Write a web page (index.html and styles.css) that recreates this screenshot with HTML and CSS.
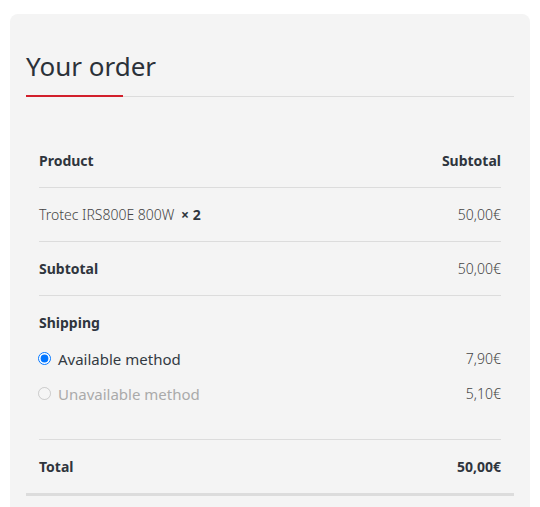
FILE: index.html
```
<!DOCTYPE html>
<html lang="en">
<head>
    <meta charset="UTF-8">
    <meta name="viewport" content="width=device-width, initial-scale=1.0">
    <title>Your order</title>
    <link rel="stylesheet" href="styles.css">
</head>
<body>
    <div class="order-card">
        <h2 class="order-title">Your order</h2>
        <div class="title-rule">
            <span class="rule-accent"></span>
            <span class="rule-line"></span>
        </div>

        <div class="order-table">
            <div class="row row-head">
                <span>Product</span>
                <span>Subtotal</span>
            </div>
            <div class="row">
                <span class="product-name">Trotec IRS800E 800W <span class="qty">&times; 2</span></span>
                <span class="price">50,00&euro;</span>
            </div>
            <div class="row">
                <span class="label">Subtotal</span>
                <span class="price">50,00&euro;</span>
            </div>
            <div class="shipping">
                <div class="label">Shipping</div>
                <label class="method">
                    <span class="method-name"><input type="radio" name="ship" checked> Available method</span>
                    <span class="price">7,90&euro;</span>
                </label>
                <label class="method disabled">
                    <span class="method-name"><input type="radio" name="ship" disabled> Unavailable method</span>
                    <span class="price">5,10&euro;</span>
                </label>
            </div>
            <div class="row row-total">
                <span class="label">Total</span>
                <span class="label">50,00&euro;</span>
            </div>
        </div>
    </div>
</body>
</html>
```

FILE: styles.css
```
html,
body {
    height: 100%;
    overflow: hidden;
}

body {
    margin: 0;
    background-color: #fff;
    font-family: "Noto Sans", "Open Sans", sans-serif;
    color: #333a42;
}

.order-card {
    box-sizing: border-box;
    margin: 14px 10px 0 10px;
    background-color: #f4f4f4;
    border-radius: 8px;
    padding: 35px 16px 0 16px;
    min-height: 510px;
}

.order-title {
    margin: 0;
    font-size: 26px;
    line-height: 34px;
    font-weight: 400;
    color: #2b3139;
}

.title-rule {
    display: flex;
    align-items: flex-end;
    margin-top: 12px;
}

.rule-accent {
    width: 97px;
    height: 2px;
    background-color: #d21f2b;
}

.rule-line {
    flex: 1;
    height: 1px;
    background-color: #dcdcdc;
}

.order-table {
    margin-top: 37px;
    padding: 0 13px;
    border-bottom: 3px solid #dcdcdc;
}

.row {
    display: flex;
    justify-content: space-between;
    align-items: center;
    height: 53px;
    border-bottom: 1px solid #dcdcdc;
    font-size: 14px;
}

.row-head,
.label {
    font-weight: 700;
    color: #2f353d;
}

.row-total {
    border-bottom: none;
}

.product-name {
    font-weight: 300;
    color: #444;
}

.qty {
    font-weight: 700;
    margin-left: 3px;
    color: #2f353d;
}

.price {
    font-weight: 300;
    color: #444;
}

.shipping {
    padding: 17px 0 28px 0;
    border-bottom: 1px solid #dcdcdc;
    font-size: 14px;
}

.shipping .label {
    line-height: 20px;
}

.method {
    display: flex;
    justify-content: space-between;
    align-items: center;
    height: 35px;
}

.shipping .label + .method {
    margin-top: 8px;
}

.method-name {
    display: flex;
    align-items: center;
    font-size: 15px;
    margin-left: -1px;
    color: #333a42;
}

.method-name input {
    margin: 0 7px 0 0;
    width: 13px;
    height: 13px;
    accent-color: #0075ff;
}

.method.disabled .method-name {
    color: #aaa;
}
```
